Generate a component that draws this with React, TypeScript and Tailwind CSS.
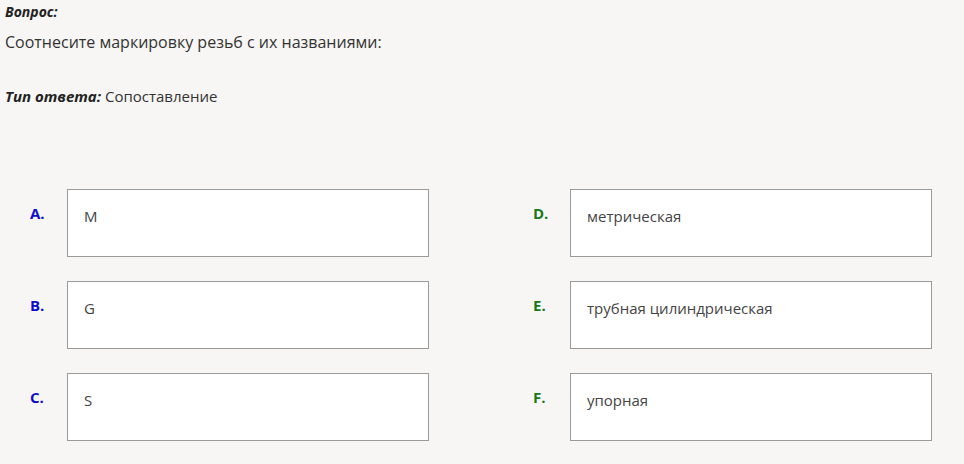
const left = [
  { key: 'A.', text: 'M' },
  { key: 'B.', text: 'G' },
  { key: 'C.', text: 'S' },
]

const right = [
  { key: 'D.', text: 'метрическая' },
  { key: 'E.', text: 'трубная цилиндрическая' },
  { key: 'F.', text: 'упорная' },
]

function Item({ label, text, tone }: { label: string; text: string; tone: 'blue' | 'green' }) {
  return (
    <div className="flex">
      <div
        className={
          'w-[37px] pt-[14px] text-[15px] leading-5 font-bold ' +
          (tone === 'blue' ? 'text-[#0d0dcc]' : 'text-[#157a17]')
        }
      >
        {label}
      </div>
      <div className="w-[362px] h-[68px] border border-[#9a9a9a] bg-white pl-4 pt-4 text-[15px] leading-5 text-[#444]">
        {text}
      </div>
    </div>
  )
}

export default function App() {
  return (
    <div
      className="min-h-[464px] w-[964px] bg-[#f7f6f4] text-[#333]"
      style={{ fontFamily: '"Open Sans", "Noto Sans", sans-serif' }}
    >
      <div className="px-[5px] pt-[2px]">
        <div className="text-[14px] leading-5 font-bold italic text-[#222]">Вопрос:</div>
        <div className="mt-[9px] text-[16px] leading-[22px]">Соотнесите маркировку резьб с их названиями:</div>
        <div className="mt-[33px] text-[15px] leading-5">
          <span className="font-bold italic text-[#222]">Тип ответа:</span> Сопоставление
        </div>
      </div>

      <div className="mt-[83px] pl-[30px] grid grid-cols-[399px_399px] gap-x-[104px] gap-y-[24px]">
        {left.map((l, i) => (
          <>
            <Item key={l.key} label={l.key} text={l.text} tone="blue" />
            <Item key={right[i].key} label={right[i].key} text={right[i].text} tone="green" />
          </>
        ))}
      </div>
    </div>
  )
}
